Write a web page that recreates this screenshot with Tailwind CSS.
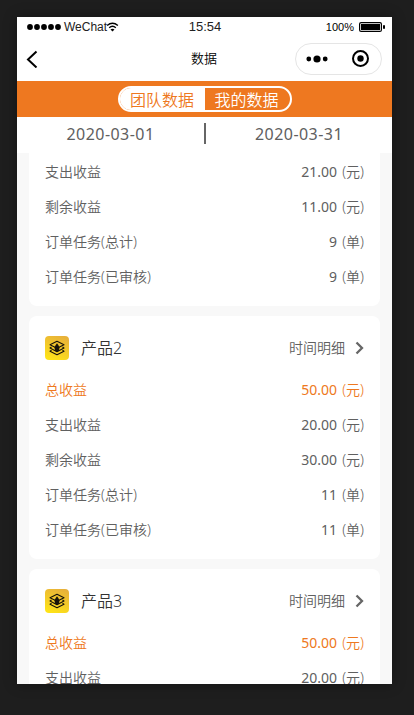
<!DOCTYPE html>
<html lang="zh-CN">
<head>
<meta charset="utf-8">
<title>数据</title>
<script src="https://cdn.jsdelivr.net/npm/@tailwindcss/browser@4"></script>
</head>
<body class="h-[715px] w-[414px] overflow-hidden bg-[#1e1e1e] p-[17px] font-['Noto_Sans','Noto_Sans_CJK_SC',sans-serif] text-sm font-[350] text-[#606060] [word-spacing:1.5px] [&_b]:font-normal">
<svg class="absolute size-0">
  <defs>
    <linearGradient id="gold" x1="0.7" y1="0" x2="0.3" y2="1"><stop offset="0" stop-color="#e8b13a"/><stop offset="1" stop-color="#fee318"/></linearGradient>
    <symbol id="product" viewBox="0 0 24 24">
      <rect width="24" height="24" rx="4" fill="url(#gold)"/>
      <g fill="none" stroke="#17130a" stroke-width="1.1" stroke-linejoin="round">
        <path d="M12 5.200 19 8.700 12 12.200 5 8.700Z"/>
        <path d="M6.500 11 5 12 12 15.700 19 12 17.500 11"/>
        <path d="M6.500 14.200 5 15.200 12 18.800 19 15.200 17.500 14.200"/>
      </g>
      <path d="M12 7.200 13.300 9 14.500 11.500 14 14.700 12 15.700 10 14.700 9.500 11.500 10.700 9Z" fill="#17130a"/>
    </symbol>
    <symbol id="chevron" viewBox="0 0 9 14"><path d="M1.500 1.500 7 7 1.500 12.500" fill="none" stroke="#666" stroke-width="2.300"/></symbol>
  </defs>
</svg>
<main class="flex h-[667px] w-[375px] flex-col overflow-hidden bg-[#f8f8f8] shadow-[0_0_12px_rgba(0,0,0,0.35)]">
  <header class="shrink-0 bg-white text-black">
    <div class="grid h-5 grid-cols-3 items-center pr-[7px] pl-[10px] font-['Liberation_Sans',sans-serif] text-xs">
      <div class="flex items-center">
        <svg width="34" height="6" viewBox="0 0 34 6"><circle cx="3" cy="3" r="2.900"/><circle cx="10" cy="3" r="2.900"/><circle cx="17" cy="3" r="2.900"/><circle cx="24" cy="3" r="2.900"/><circle cx="31" cy="3" r="2.900"/></svg>
        <span class="ml-[3px] text-[#222]">WeChat</span>
        <svg class="-ml-px" width="13" height="10" viewBox="0 0 12 10" fill="none" stroke="#000" stroke-width="1.400"><path d="M.6 3.500Q6-1 11.400 3.500M2.700 5.800Q6 2.800 9.300 5.800"/><path d="M4 7.500Q6 6 8 7.500L6 9.500Z" fill="#000" stroke="none"/></svg>
      </div>
      <span class="pr-[2px] text-center text-[13px] text-[#222]">15:54</span>
      <div class="flex items-center justify-end">
        <span class="mr-[5px] text-[11px]">100%</span>
        <svg width="26" height="10" viewBox="0 0 26 10"><rect x=".6" y=".6" width="21.800" height="8.800" rx="1.500" fill="none" stroke="#000" stroke-width="1.200"/><rect x="2" y="2" width="19" height="6"/><rect x="24" y="3" width="2" height="4" rx="1"/></svg>
      </div>
    </div>
    <div class="grid h-11 grid-cols-3 items-center pr-[10px] pl-[9px]">
      <svg width="12" height="18" viewBox="0 0 12 18" fill="none" stroke="#000" stroke-width="2"><path d="M10.500 1.500 2 9.500 10.500 17.500"/></svg>
      <h1 class="-mt-[3px] text-center text-[13px] leading-5 font-[350]">数据</h1>
      <div class="-mt-px flex h-8 w-[87px] items-center justify-between justify-self-end rounded-full border border-[#e5e5e5] pr-3 pl-[10px]">
        <svg width="22" height="8" viewBox="0 0 22 8"><circle cx="2.800" cy="4" r="2.400"/><circle cx="11" cy="4" r="3.600"/><circle cx="19.200" cy="4" r="2.400"/></svg>
        <svg width="17" height="17" viewBox="0 0 17 17"><circle cx="8.500" cy="8.500" r="7.500" fill="none" stroke="#000" stroke-width="2"/><circle cx="8.500" cy="8.500" r="3.200"/></svg>
      </div>
    </div>
  </header>
  <nav class="flex h-9 shrink-0 items-center justify-center bg-[#ee7820]">
    <div class="ml-px flex h-[26px] w-[174px] overflow-hidden rounded-full border-2 border-white text-base leading-6">
      <span class="w-[85px] bg-white pr-px text-center text-[#ee7820]">团队数据</span>
      <span class="flex-1 pr-[2px] text-center text-white">我的数据</span>
    </div>
  </nav>
  <div class="flex h-9 shrink-0 items-center bg-white text-base tracking-[0.45px]">
    <b class="-mt-[3px] w-[187px] text-center">2020-03-01</b>
    <i class="-mt-1 h-[21px] w-[2px] bg-[#666]"></i>
    <b class="-mt-[3px] w-[186px] text-center">2020-03-31</b>
  </div>
  <section class="flex min-h-0 flex-1 flex-col gap-[10px] overflow-hidden px-3">
    <article class="shrink-0 rounded-b-lg bg-white px-4 pt-px pb-3">
      <div class="flex h-[35px] items-center justify-between"><span>支出收益</span><span><b>21.00</b> (元)</span></div>
      <div class="flex h-[35px] items-center justify-between"><span>剩余收益</span><span><b>11.00</b> (元)</span></div>
      <div class="flex h-[35px] items-center justify-between"><span>订单任务(总计)</span><span><b>9</b> (单)</span></div>
      <div class="flex h-[35px] items-center justify-between"><span>订单任务(已审核)</span><span><b>9</b> (单)</span></div>
    </article>
    <article class="shrink-0 rounded-lg bg-white px-4 pt-2 pb-3">
      <div class="flex h-12 items-center"><svg class="size-6"><use href="#product"/></svg><h2 class="ml-3 text-base font-[350] text-[#333]">产品2</h2><span class="mr-[10px] ml-auto">时间明细</span><svg class="h-[14px] w-[9px]"><use href="#chevron"/></svg></div>
      <div class="flex h-[35px] items-center justify-between text-[#ee7820]"><span>总收益</span><span><b>50.00</b> (元)</span></div>
      <div class="flex h-[35px] items-center justify-between"><span>支出收益</span><span><b>20.00</b> (元)</span></div>
      <div class="flex h-[35px] items-center justify-between"><span>剩余收益</span><span><b>30.00</b> (元)</span></div>
      <div class="flex h-[35px] items-center justify-between"><span>订单任务(总计)</span><span><b>11</b> (单)</span></div>
      <div class="flex h-[35px] items-center justify-between"><span>订单任务(已审核)</span><span><b>11</b> (单)</span></div>
    </article>
    <article class="shrink-0 rounded-lg bg-white px-4 pt-2 pb-3">
      <div class="flex h-12 items-center"><svg class="size-6"><use href="#product"/></svg><h2 class="ml-3 text-base font-[350] text-[#333]">产品3</h2><span class="mr-[10px] ml-auto">时间明细</span><svg class="h-[14px] w-[9px]"><use href="#chevron"/></svg></div>
      <div class="flex h-[35px] items-center justify-between text-[#ee7820]"><span>总收益</span><span><b>50.00</b> (元)</span></div>
      <div class="flex h-[35px] items-center justify-between"><span>支出收益</span><span><b>20.00</b> (元)</span></div>
    </article>
  </section>
</main>
</body>
</html>
